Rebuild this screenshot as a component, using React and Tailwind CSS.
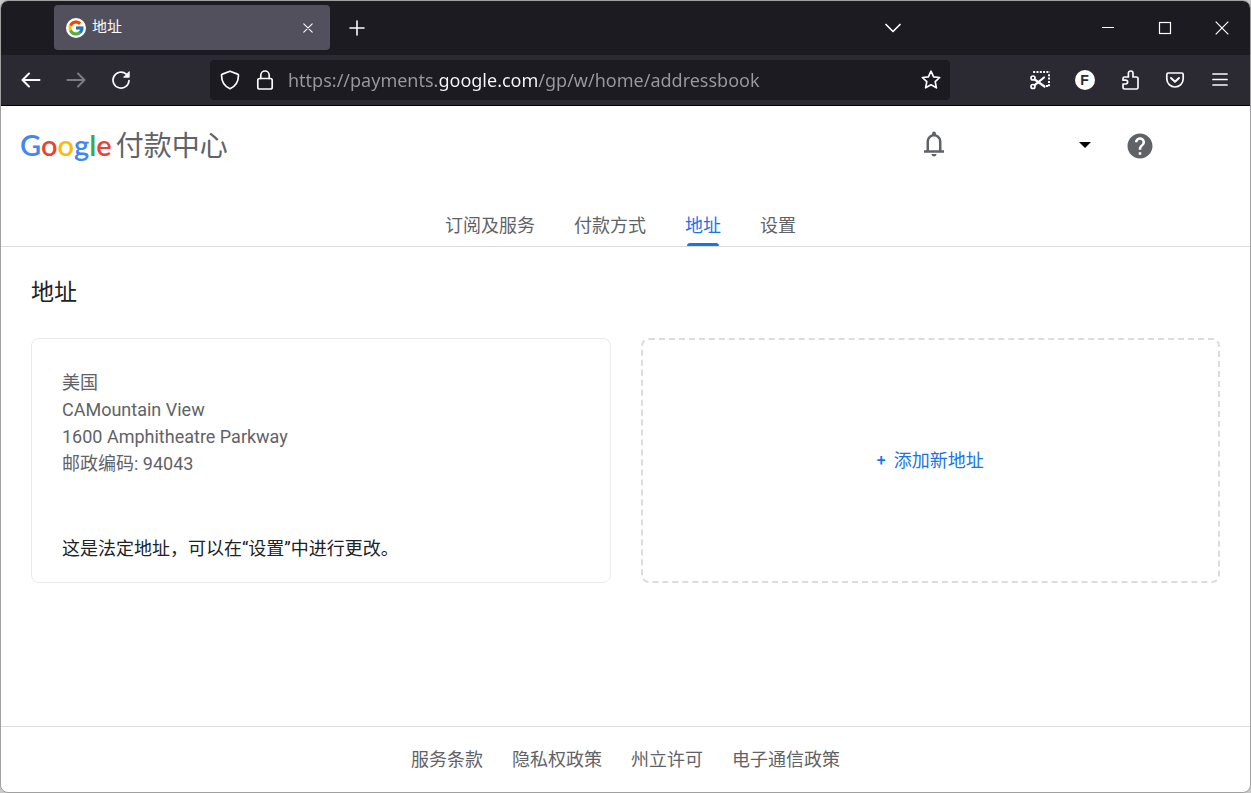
import { useState } from "react"
import { FcGoogle } from "react-icons/fc"
import { MdHelp } from "react-icons/md"

const tabs = ["订阅及服务", "付款方式", "地址", "设置"]
const footerLinks = ["服务条款", "隐私权政策", "州立许可", "电子通信政策"]
const addressLines = ["美国", "CAMountain View", "1600 Amphitheatre Parkway", "邮政编码: 94043"]

const Icon = ({ children, className = "size-5", viewBox = "0 0 20 20" }) => (
  <svg
    className={className}
    viewBox={viewBox}
    fill="none"
    stroke="currentColor"
    strokeWidth={1.7}
    strokeLinecap="round"
    strokeLinejoin="round"
    aria-hidden="true"
  >
    {children}
  </svg>
)

const ToolButton = ({ label, className = "", children }) => (
  <button
    type="button"
    aria-label={label}
    className={`flex h-10 w-[45px] shrink-0 items-center justify-center ${className}`}
  >
    {children}
  </button>
)

const WindowButton = ({ label, children }) => (
  <button type="button" aria-label={label} className="flex h-[54px] w-[57px] items-center justify-center">
    <svg className="size-3.5" viewBox="0 0 14 14" fill="none" stroke="currentColor" strokeWidth={1.2} aria-hidden="true">
      {children}
    </svg>
  </button>
)

const TabStrip = () => (
  <div className="flex h-[54px] items-center bg-[#1c1b22] pl-[53px]">
    <div className="mb-px flex h-[45px] w-[276px] items-center rounded bg-[#52505c] pr-2 pl-3">
      <span className="flex size-5 items-center justify-center rounded-full bg-white">
        <FcGoogle className="size-[18px]" aria-hidden="true" />
      </span>
      <span className="ml-1.5 flex-1 text-[15px]">地址</span>
      <button type="button" aria-label="关闭标签页" className="flex size-7 items-center justify-center">
        <Icon className="size-2.5" viewBox="0 0 10 10">
          <path strokeWidth={1.1} d="M.8.8l8.4 8.4M9.2.8L.8 9.2" />
        </Icon>
      </button>
    </div>
    <ToolButton label="新建标签页" className="ml-1">
      <Icon className="size-4" viewBox="0 0 16 16">
        <path strokeWidth={1.6} d="M8 1v14M1 8h14" />
      </Icon>
    </ToolButton>
    <ToolButton label="列出所有标签页" className="mr-[164px] ml-auto">
      <Icon className="size-4" viewBox="0 0 16 16">
        <path d="M1 4.500l7 7 7-7" />
      </Icon>
    </ToolButton>
    <WindowButton label="最小化">
      <path d="M1 6.5h12" />
    </WindowButton>
    <WindowButton label="最大化">
      <rect x="1.5" y="1.5" width="11" height="11" />
    </WindowButton>
    <WindowButton label="关闭">
      <path d="M.7.7l12.6 12.6M13.3.7L.7 13.3" />
    </WindowButton>
  </div>
)

const Toolbar = () => {
  const [url, setUrl] = useState("https://payments.google.com/gp/w/home/addressbook")

  return (
    <div className="flex h-[51px] items-center border-b border-black bg-[#2b2a33] pr-2 pl-[7px]">
      <ToolButton label="后退">
        <Icon>
          <path strokeWidth={2} d="M18.5 10h-17M8 3.5L1.5 10 8 16.5" />
        </Icon>
      </ToolButton>
      <ToolButton label="前进" className="text-[#7c7b84]">
        <Icon>
          <path strokeWidth={2} d="M1.5 10h17M12 3.5l6.5 6.5-6.5 6.5" />
        </Icon>
      </ToolButton>
      <ToolButton label="刷新">
        <Icon>
          <path d="M18 10.5a8 8 0 1 1-2.7-6.4l1.9 1.9" />
          <path d="M18.2 2v5.2H13z" fill="currentColor" strokeWidth={1} />
        </Icon>
      </ToolButton>

      <div className="mx-[67px] flex h-10 min-w-0 flex-1 items-center rounded bg-[#1c1b22] pr-[7px] pl-2.5">
        <Icon className="size-5 shrink-0">
          <path d="M10 1.2l7.6 2.9c.6.2.9.6.9 1.2-.1 6.3-2.7 11-8.5 13.5C4.2 16.3 1.6 11.6 1.5 5.3c0-.6.3-1 .9-1.2z" />
        </Icon>
        <Icon className="ml-[15px] size-5 shrink-0">
          <rect x="2.8" y="8.5" width="14.4" height="10.5" rx="1.8" />
          <path d="M5.8 8.5V5.2a4.2 4.2 0 0 1 8.4 0v3.3" />
        </Icon>
        <input
          type="text"
          aria-label="网址"
          value={url}
          onChange={(e) => setUrl(e.target.value)}
          className="ml-[13px] min-w-0 flex-1 bg-[linear-gradient(90deg,#9a99a2_150px,#fbfbfe_150px,#fbfbfe_250px,#9a99a2_250px)] bg-clip-text font-['Noto_Sans',sans-serif] text-[18px] text-transparent outline-none"
        />
        <button type="button" aria-label="为此页添加书签" className="flex size-6 items-center justify-center">
          <Icon>
            <path d="M10 1.2l2.6 5.6 6.1.7-4.5 4.2 1.2 6.1L10 14.8l-5.4 3 1.2-6.1L1.3 7.5l6.1-.7z" />
          </Icon>
        </button>
      </div>

      <ToolButton label="截图">
        <Icon>
          <path
            strokeWidth={2}
            strokeLinecap="butt"
            strokeDasharray="2 1.3"
            d="M3.2 2H20M19 4.300v12.500M16 16h2"
          />
          <circle cx="3" cy="8" r="2" />
          <circle cx="3" cy="16.500" r="2" />
          <path strokeWidth={2.2} d="M4.700 9.500L14.500 16.500M4.700 15.200L14 7.500" />
        </Icon>
      </ToolButton>
      <ToolButton label="账户">
        <span className="flex size-5 items-center justify-center rounded-full bg-white font-['Liberation_Sans',sans-serif] text-sm font-bold text-[#2b2a33]">
          F
        </span>
      </ToolButton>
      <ToolButton label="扩展">
        <Icon>
          <path d="M4.500 19h12a1.500 1.500 0 0 0 1.500-1.500v-9A1.500 1.500 0 0 0 16.500 7H13V3.300a2.300 2.300 0 0 0-4.600 0V7H4.500A1.500 1.500 0 0 0 3 8.500v1.700h2.700a1.900 1.900 0 0 1 0 3.800H3v3.500A1.500 1.500 0 0 0 4.500 19z" />
        </Icon>
      </ToolButton>
      <ToolButton label="保存到 Pocket">
        <Icon>
          <path d="M3.400 3h13.200A1.600 1.600 0 0 1 18.200 4.600v4.200a8.200 8.200 0 0 1-16.400 0V4.600A1.600 1.600 0 0 1 3.400 3z" />
          <path strokeWidth={2} d="M6 8l4 3.800L14 8" />
        </Icon>
      </ToolButton>
      <ToolButton label="菜单">
        <Icon>
          <path d="M3 4h14M3 9.500h14M3 15h14" />
        </Icon>
      </ToolButton>
    </div>
  )
}

const PageHeader = () => (
  <header className="flex h-20 items-center pr-[95px] pl-[19px]">
    <a href="#home" className="flex items-baseline">
      <span className="font-['Lato',sans-serif] text-[29px] leading-9 font-semibold">
        <span className="text-[#4285f4]">G</span>
        <span className="text-[#ea4335]">o</span>
        <span className="text-[#fbbc05]">o</span>
        <span className="text-[#4285f4]">g</span>
        <span className="text-[#34a853]">l</span>
        <span className="text-[#ea4335]">e</span>
      </span>
      <span className="ml-1 text-[28px] leading-9 text-[#5f6368]">付款中心</span>
    </a>
    <button type="button" aria-label="通知" className="mr-[130px] mb-1 ml-auto text-[#5f6368]">
      <svg className="size-[30px]" viewBox="0 0 24 24" fill="currentColor" aria-hidden="true">
        <path d="M4 19v-2h2v-7q0-2.075 1.25-3.687T10.5 4.2v-.7q0-.625.438-1.062T12 2t1.063.438T13.5 3.5v.7q2 .5 3.25 2.113T18 10v7h2v2zm8 3q-.825 0-1.412-.587T10 20h4q0 .825-.587 1.413T12 22M8 17h8v-7q0-1.65-1.175-2.825T12 6T9.175 7.175T8 10z" />
      </svg>
    </button>
    <button type="button" aria-label="切换账户" className="mr-[34px] mb-0.5">
      <svg className="h-1.5 w-3" viewBox="0 0 12 6" aria-hidden="true">
        <path d="M0 0h12L6 6z" fill="#000" />
      </svg>
    </button>
    <button type="button" aria-label="帮助" className="text-[#5f6368]">
      <MdHelp className="size-[30px]" aria-hidden="true" />
    </button>
  </header>
)

const App = () => {
  const [activeTab, setActiveTab] = useState("地址")

  return (
    <div className="min-h-screen bg-[#c8c8c8] font-['Roboto','Noto_Sans_CJK_SC',sans-serif]">
      <div className="flex min-h-screen flex-col overflow-hidden rounded-lg border border-[#a0a0a0] bg-white text-lg leading-[27px] text-[#5f6368]">
        <div className="text-[#fbfbfe]">
          <TabStrip />
          <Toolbar />
        </div>

        <PageHeader />

        <nav className="flex justify-center gap-[39px] border-b border-[#dadce0] pt-[26px] pr-2.5">
          {tabs.map((tab) => (
            <a
              key={tab}
              href={`#${tab}`}
              onClick={() => setActiveTab(tab)}
              className={`relative pb-[7px] ${tab === activeTab ? "text-[#1a73e8]" : ""}`}
            >
              {tab}
              {tab === activeTab && <span className="absolute inset-x-0.5 bottom-0 h-[3px] rounded-t bg-[#1a73e8]" />}
            </a>
          ))}
        </nav>

        <main className="flex-1 px-[30px] pt-[30px]">
          <h1 className="text-[23px] leading-8 text-[#202124]">地址</h1>
          <div className="mt-[29px] grid grid-cols-2 gap-[30px]">
            <section className="rounded-lg border border-[#e8eaed] px-[30px] pt-[30px] pb-5">
              <address className="not-italic">
                {addressLines.map((line) => (
                  <p key={line}>{line}</p>
                ))}
              </address>
              <p className="mt-[58px] text-[#202124]">这是法定地址，可以在“设置”中进行更改。</p>
            </section>
            <button
              type="button"
              className="flex items-center justify-center gap-2 rounded-lg border-2 border-dashed border-[#dadce0] text-[#1a73e8]"
            >
              <span className="text-base font-medium">+</span>
              <span>添加新地址</span>
            </button>
          </div>
        </main>

        <footer className="flex h-[66px] items-center justify-center gap-[29px] border-t border-[#dadce0]">
          {footerLinks.map((link) => (
            <a key={link} href={`#${link}`}>
              {link}
            </a>
          ))}
        </footer>
      </div>
    </div>
  )
}

export default App
